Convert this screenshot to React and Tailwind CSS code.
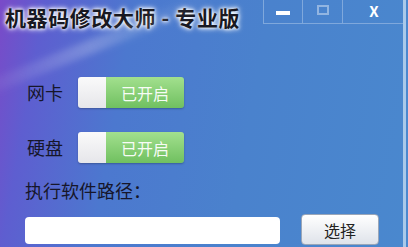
import React, { useState } from "react";

const font = { fontFamily: '"Noto Sans CJK SC", "Noto Sans", sans-serif' };

// Toggle pill: white knob on the left, green "已开启" on the right
const Toggle = ({ on, onClick }) => (
  <button
    onClick={onClick}
    className="flex h-[31px] w-[106px] overflow-hidden rounded-[3px] shadow-[0_1px_2px_rgba(0,0,0,0.25)]"
  >
    <span className="h-full w-[28px] bg-gradient-to-b from-[#fafafa] to-[#e6e6ea]" />
    <span
      className={`flex h-full flex-1 items-center justify-center text-[16px] text-white/95 ${
        on
          ? "bg-gradient-to-b from-[#a2e08e] to-[#70c060]"
          : "bg-gradient-to-b from-[#c8c8c8] to-[#a8a8a8]"
      }`}
    >
      {on ? "已开启" : "已关闭"}
    </span>
  </button>
);

const App = () => {
  const [nic, setNic] = useState(true);
  const [disk, setDisk] = useState(true);

  return (
    <div
      className="relative flex h-[247px] w-[408px] flex-col overflow-hidden bg-[linear-gradient(100deg,#7a4ac8_0%,#5e5ed0_10%,#4c78cf_30%,#4a82cd_60%,#4a88ce_100%)]"
      style={font}
    >
      {/* light diagonal streak at the top left */}
      <div className="pointer-events-none absolute left-[-40px] top-[40px] h-[14px] w-[260px] -rotate-[22deg] bg-[linear-gradient(90deg,transparent,rgba(255,255,255,0.22),transparent)] blur-[3px]" />
      <div className="pointer-events-none absolute right-[2px] top-0 h-full w-[3px] bg-[#a9c9ea]" />

      {/* title bar */}
      <div className="flex h-[34px] items-start justify-between">
        <h1 className="pl-[5px] pt-[4px] text-[21px] font-bold leading-[26px] tracking-[0.6px] text-[#181822] [text-shadow:0_0_3px_#fff,0_0_5px_#fff,0_0_6px_rgba(255,255,255,0.8)]">
          机器码修改大师 - 专业版
        </h1>
        <div className="mr-[3px] flex h-[24px] border-b border-l border-[#7fa8dc]">
          <button className="flex w-[39px] items-center justify-center border-r border-[#7fa8dc]">
            <span className="mt-[3px] h-[4px] w-[14px] bg-white" />
          </button>
          <button className="flex w-[40px] items-center justify-center border-r border-[#7fa8dc]">
            <span className="mb-[4px] h-[10px] w-[12px] border-2 border-white/40" />
          </button>
          <div className="flex w-[62px] items-start justify-center pt-[2px]">
            <span className="text-[15px] font-bold leading-[18px] text-white">X</span>
          </div>
        </div>
      </div>

      {/* toggles */}
      <div className="mt-[43px] flex flex-col gap-[24px] pl-[27px] text-[18px] text-[#16162a]">
        <div className="flex items-center gap-[15px]">
          <span>网卡</span>
          <Toggle on={nic} onClick={() => setNic(!nic)} />
        </div>
        <div className="flex items-center gap-[15px]">
          <span>硬盘</span>
          <Toggle on={disk} onClick={() => setDisk(!disk)} />
        </div>
      </div>

      {/* path */}
      <div className="mt-[15px] pl-[25px] text-[18px] leading-[24px] text-[#16162a]">执行软件路径：</div>
      <div className="mt-[12px] flex items-center pl-[25px]">
        <input className="mt-[2px] h-[27px] w-[255px] rounded-[4px] bg-white px-2 text-[14px] outline-none" />
        <button className="ml-[21px] h-[31px] w-[78px] rounded-[4px] border border-[#9aa6b8] bg-gradient-to-b from-[#ffffff] to-[#dfe3ea] text-[16px] text-[#222]">
          选择
        </button>
      </div>
    </div>
  );
};

export default App;
